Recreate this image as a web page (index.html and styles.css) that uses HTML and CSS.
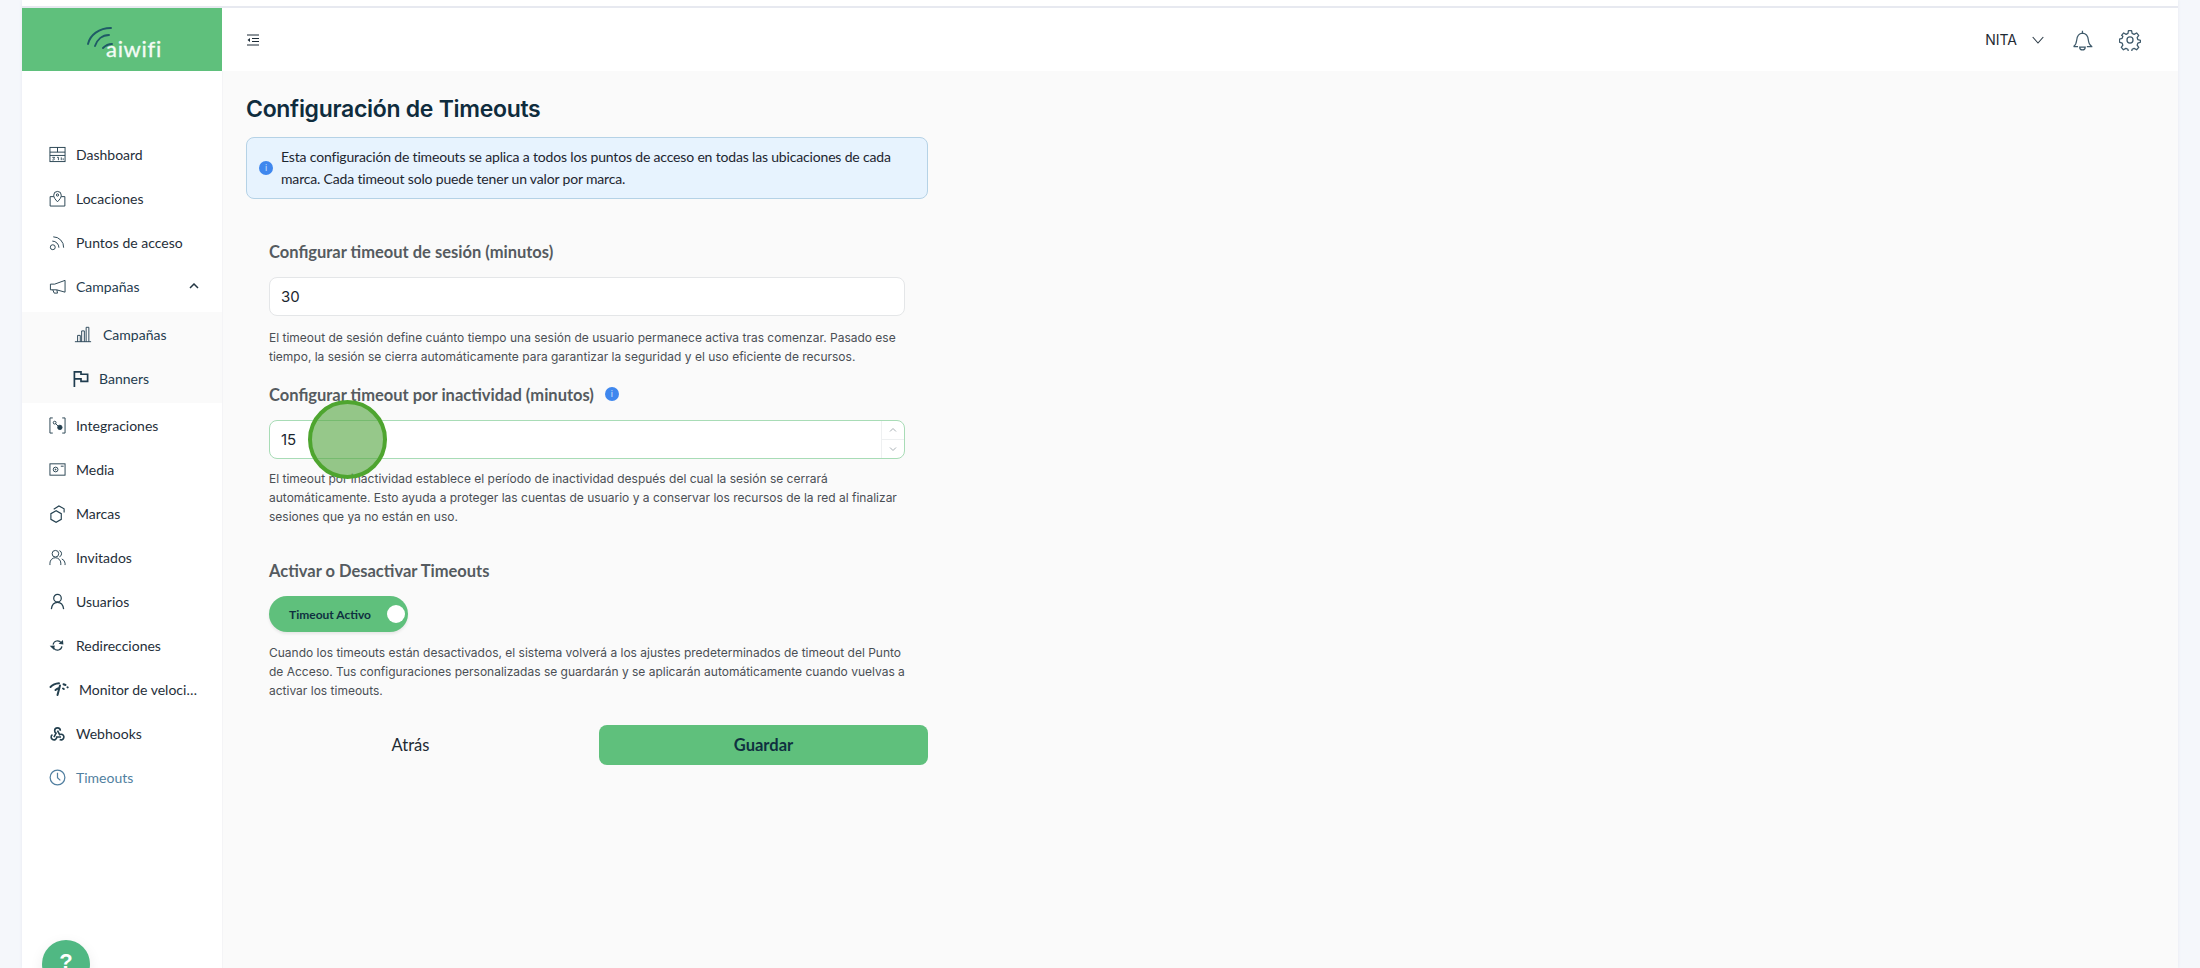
FILE: index.html
```html
<!DOCTYPE html>
<html lang="es">
<head>
<meta charset="utf-8">
<title>Configuración de Timeouts</title>
<link rel="stylesheet" href="styles.css">
</head>
<body>
<div class="window">
  <div class="topstrip"></div>
  <div class="app">
    <aside class="sidebar">
      <div class="brand">
        <svg class="brand-arcs" viewBox="0 0 30 24" fill="none" stroke="#1f5a66" stroke-linecap="round" stroke-width="1.900"><path d="M1 18C3 9 12 2 24 2"/><path d="M8 20C10 14 15 9 22 9"/><path d="M16 22C18 20 21 18 25 18"/></svg>
        <span class="brand-name">aiwifi</span>
      </div>
      <nav class="nav">
        <a class="nav-item"><svg class="ico" viewBox="0 0 18 18" fill="none" stroke="currentColor"><rect x="1" y="1.5" width="16" height="15"/><path d="M1 6.5h16M1 10h16M9 1.5v5"/><path d="M3.5 12h2.5l-1 1.2c1.2 0 1.2 2-1.5 1.6M8.500 12h1.500v3M13 12v3M15 13v2" stroke-width=".9"/></svg><span>Dashboard</span></a>
        <a class="nav-item"><svg class="ico" viewBox="0 0 18 18" fill="none" stroke="currentColor"><path d="M5 7H1.200v10h15.600V7H13"/><path d="M9 12.500C6.500 9.800 5 8 5 5.500a4 4 0 0 1 8 0C13 8 11.500 9.800 9 12.500z"/><circle cx="9" cy="5.300" r="1.200"/></svg><span>Locaciones</span></a>
        <a class="nav-item"><svg class="ico" viewBox="0 0 18 18" fill="none" stroke="currentColor"><circle cx="4" cy="14" r="2.600"/><path d="M3.500 7.500a7 7 0 0 1 7 7M4.500 3a11 11 0 0 1 11 11.500"/></svg><span>Puntos de acceso</span></a>
        <a class="nav-item nav-open"><svg class="ico" viewBox="0 0 18 18" fill="none" stroke="currentColor"><path d="M17 2.500v12.500L8 12.500H1.500V6.500H6L17 2.500z"/><path d="M4 12.500l1.500 3.500H9l-.7-3.500"/></svg><span>Campañas</span><svg class="caret" viewBox="0 0 10 6" fill="none" stroke="currentColor" stroke-width="1.500"><path d="M1 5l4-4 4 4"/></svg></a>
        <div class="submenu">
          <a class="sub-item"><svg class="sub-ico" viewBox="0 0 20 18" fill="none" stroke="currentColor"><path d="M1 17h18M4 17v-7h3v7M8.500 17V5h3v12M13.500 17V1h3v16"/></svg><span>Campañas</span></a>
          <a class="sub-item sub-flag"><svg class="sub-ico" viewBox="0 0 18 18" fill="none" stroke="currentColor" stroke-width="1.800"><path d="M2 18V2h7v2.500h7v7.500H9V9.500H2"/></svg><span>Banners</span></a>
        </div>
        <a class="nav-item"><svg class="ico" viewBox="0 0 18 18" fill="none" stroke="currentColor"><path d="M4 1H1v16h3M14 1h3v16h-3"/><circle cx="6" cy="6" r="1.500"/><circle cx="11.500" cy="11" r="2.300" fill="currentColor"/><path d="M7 7l3 3"/></svg><span>Integraciones</span></a>
        <a class="nav-item"><svg class="ico" viewBox="0 0 18 18" fill="none" stroke="currentColor"><rect x="1" y="3" width="16" height="12"/><circle cx="7" cy="9" r="2.500"/><circle cx="7" cy="9" r=".5" fill="currentColor"/><path d="M12.500 5.500h3"/></svg><span>Media</span></a>
        <a class="nav-item"><svg class="ico" viewBox="0 0 18 18" fill="none" stroke="currentColor" stroke-width="1.200"><path d="M7.500 6L2 9.200v6l5.500 3.100 5.500-3.100v-6z"/><path d="M5 4.500L10.500 1l5.500 3v4"/></svg><span>Marcas</span></a>
        <a class="nav-item"><svg class="ico" viewBox="0 0 18 18" fill="none" stroke="currentColor"><circle cx="6.800" cy="5" r="3.500"/><path d="M1 17v-2a5.500 5.500 0 0 1 11.500 0v2"/><path d="M11 1.700a3.500 3.500 0 0 1 0 6.600M13.500 10.500A5.500 5.500 0 0 1 17 15v2"/></svg><span>Invitados</span></a>
        <a class="nav-item"><svg class="ico" viewBox="0 0 18 18" fill="none" stroke="currentColor" stroke-width="1.300"><circle cx="9" cy="5.500" r="4"/><path d="M2.500 17c.6-4.500 3-7 6.500-7s5.900 2.500 6.500 7"/></svg><span>Usuarios</span></a>
        <a class="nav-item"><svg class="ico ico-small" viewBox="0 0 18 18" fill="none" stroke="currentColor" stroke-width="1.500"><path d="M3.500 8a5.600 5.600 0 0 1 10-2.500M14.500 10a5.600 5.600 0 0 1-10 2.500"/><path d="M12 6.500l3.500.5-.3-3.300z" fill="currentColor"/><path d="M1 10l3.700-.2-.5 3.300z" fill="currentColor"/></svg><span>Redirecciones</span></a>
        <a class="nav-item nav-speed"><svg class="ico" viewBox="0 0 20 18" fill="none" stroke="currentColor" stroke-width="2" stroke-linecap="round"><path d="M1.500 7C3.500 4.800 6.500 3.500 10 3.300M6.500 10c1-.9 2-1.500 3-1.700M11 5.500L8.500 15M14.500 4.200l2 .8M14 8.500l.8.500M18.500 7.200l.2.2"/></svg><span class="ellip">Monitor de velocidad</span></a>
        <a class="nav-item nav-hook"><svg class="ico" viewBox="0 0 24 24" fill="none" stroke="currentColor" stroke-width="2.300"><path d="M4.876 13.610a4 4 0 1 0 6.124 3.390h6"/><path d="M15.066 20.502a4 4 0 1 0 1.934-7.502c-.706 0-1.424.179-2 .5l-3-5.500"/><path d="M16 8a4 4 0 1 0-8 0c0 1.506.77 2.818 2 3.500l-3 5.500"/></svg><span>Webhooks</span></a>
        <a class="nav-item nav-active"><svg class="ico" viewBox="0 0 18 18" fill="none" stroke="currentColor" stroke-width="1.300"><circle cx="9" cy="9" r="7.800"/><path d="M9 4v5.300l3 2.700"/></svg><span>Timeouts</span></a>
      </nav>
    </aside>
    <div class="main">
      <header class="topbar">
        <svg class="menu-ico" viewBox="0 0 14 14" fill="none" stroke="#1d2b36"><path d="M1 2h12M6 5.500h7M6 8.500h7M1 12h12"/><path d="M4 5L1.500 7 4 9z" fill="#1d2b36" stroke="none"/></svg>
        <div class="top-right">
          <span class="user">NITA</span>
          <svg class="chev" viewBox="0 0 12 8" fill="none" stroke="#2b3a46" stroke-width="1.100"><path d="M.7 1l5.300 6 5.300-6"/></svg>
          <svg class="bell" viewBox="0 0 20 20" fill="none" stroke="#3f5a6b" stroke-width="1.100"><path d="M1.500 16c2-1.500 2.500-3 2.800-6 .3-3.500 2.200-6 5.200-6.300 3 .3 5 2.800 5.300 6 .3 3 1 4.800 3.200 6.300"/><path d="M1.500 16h4M13.500 16h5M9.500 3.700V1.500"/><path d="M7 16.500a2.500 2.500 0 0 0 5 0z"/></svg>
          <svg class="gear" viewBox="0 0 24 24" fill="none" stroke="#3f5a6b" stroke-width="1.400" stroke-linejoin="round"><circle cx="12" cy="12" r="3.300"/><path d="M10.300 1.800h3.400l.6 3 2.200 1 2.700-1.500 2.300 2.600-1.700 2.500.8 2.300 2.900.8v1.900l-2.900.9-.8 2.300 1.700 2.500-2.300 2.500-2.700-1.500-2.200 1-.6 3h-3.400l-.6-3-2.200-1-2.700 1.500-2.300-2.500 1.700-2.500-.8-2.300-2.900-.9V11l2.900-.8.800-2.300L2.800 6.900l2.300-2.600 2.700 1.500 2-1z"/></svg>
        </div>
      </header>
      <main class="content">
        <h1 class="title">Configuración de Timeouts</h1>
        <div class="notice">
          <span class="info-dot">i</span>
          <p>Esta configuración de timeouts se aplica a todos los puntos de acceso en todas las ubicaciones de cada marca. Cada timeout solo puede tener un valor por marca.</p>
        </div>
        <section class="form">
          <div class="label">Configurar timeout de sesión (minutos)</div>
          <div class="field"><span>30</span></div>
          <p class="help">El timeout de sesión define cuánto tiempo una sesión de usuario permanece activa tras comenzar. Pasado ese tiempo, la sesión se cierra automáticamente para garantizar la seguridad y el uso eficiente de recursos.</p>
          <div class="label label-two">Configurar timeout por inactividad (minutos)<span class="info-dot info-inline">i</span></div>
          <div class="field field-focus">
            <span>15</span>
            <div class="spin">
              <svg viewBox="0 0 8 5" fill="none" stroke="#a8b0b5"><path d="M1 4l3-3 3 3"/></svg>
              <svg viewBox="0 0 8 5" fill="none" stroke="#a8b0b5"><path d="M1 1l3 3 3-3"/></svg>
            </div>
            <div class="click-marker"></div>
          </div>
          <p class="help help-two">El timeout por inactividad establece el período de inactividad después del cual la sesión se cerrará automáticamente. Esto ayuda a proteger las cuentas de usuario y a conservar los recursos de la red al finalizar sesiones que ya no están en uso.</p>
          <div class="label label-three">Activar o Desactivar Timeouts</div>
          <div class="switch"><span>Timeout Activo</span><i class="knob"></i></div>
          <p class="help help-three">Cuando los timeouts están desactivados, el sistema volverá a los ajustes predeterminados de timeout del Punto de Acceso. Tus configuraciones personalizadas se guardarán y se aplicarán automáticamente cuando vuelvas a activar los timeouts.</p>
        </section>
        <div class="actions">
          <button class="btn btn-back">Atrás</button>
          <button class="btn btn-save">Guardar</button>
        </div>
      </main>
    </div>
  </div>
  <div class="help-fab">?</div>
</div>
</body>
</html>
```
FILE: styles.css
```css
* { box-sizing: border-box; }
html, body { margin: 0; height: 100%; }
body { background: #f5f7fb; overflow: hidden; font-family: "Lato", "Liberation Sans", sans-serif; }
.window { position: relative; height: 968px; margin: 0 22px; background: #fff; display: flex; flex-direction: column; overflow: hidden; box-shadow: 0 0 3px #e4e8f1; }
.topstrip { height: 8px; flex: none; background: #fff; border-bottom: 2px solid #e7e9f0; }
.app { flex: 1; display: flex; min-height: 0; }
.sidebar { width: 200px; flex: none; background: #fff; }
.brand { height: 63px; background: #5fc07c; position: relative; display: flex; padding: 26px 0 0 84px; }
.brand-arcs { position: absolute; left: 65px; top: 18px; width: 30px; height: 24px; }
.brand-name { color: #f3fbf5; font-size: 22px; line-height: 30px; letter-spacing: .7px; -webkit-text-stroke: .3px #f3fbf5; }
.nav { padding-top: 61px; }
.nav-item { height: 44px; display: flex; align-items: center; padding-left: 27px; gap: 10px; font-size: 14px; color: #1f2f3a; }
.ico { width: 17px; height: 17px; flex: none; color: #24404f; overflow: visible; }
.ico-small { transform: scale(.85); }
.caret { width: 10px; height: 6px; margin-left: 40px; color: #243744; }
.nav-open { color: #1f3c4f; }
.submenu { margin-top: 4px; height: 91px; background: #fafafa; }
.sub-item { height: 44px; display: flex; align-items: center; gap: 11px; padding-left: 52px; font-size: 14px; color: #1f3c4f; }
.sub-ico { width: 18px; height: 17px; flex: none; }
.sub-flag { gap: 9px; padding-left: 50px; }
.nav-speed { gap: 10px; }
.nav-speed .ico { width: 20px; height: 18px; }
.ellip { width: 118px; white-space: nowrap; overflow: hidden; text-overflow: ellipsis; }
.nav-active { color: #517fa0; }
.nav-active .ico { color: #517fa0; }
.main { flex: 1; background: #fafafa; min-width: 0; box-shadow: inset 1px 0 0 #f4f4f6; }
.topbar { height: 63px; background: #fff; display: flex; align-items: center; justify-content: space-between; padding: 0 37px 0 24px; }
.menu-ico { width: 14px; height: 14px; }
.top-right { display: flex; align-items: center; }
.user { font-family: "Inter", sans-serif; font-size: 14px; color: #1f2b34; }
.chev { width: 12px; height: 8px; margin-left: 15px; }
.bell { width: 22px; height: 22px; margin-left: 28px; }
.gear { width: 22px; height: 22px; margin-left: 25px; }
.content { padding: 23px 0 0 24px; width: 706px; }
.title { margin: 0; font-family: "Inter", sans-serif; font-weight: 600; font-size: 23px; line-height: 30px; letter-spacing: -.3px; color: #0f2c3d; }
.notice { margin-top: 13px; height: 62px; display: flex; align-items: center; gap: 8px; padding: 0 20px 0 12px; background: #e7f3fe; border: 1px solid #b5d2e6; border-radius: 8px; }
.notice p { margin: 0; font-size: 14px; line-height: 22px; letter-spacing: -.17px; color: #1d2630; }
.info-dot { width: 14px; height: 14px; flex: none; border-radius: 50%; background: #3f87ee; color: #cfe2fc; font: 9px/14px "Inter", sans-serif; text-align: center; }
.form { padding: 0 23px; }
.label { margin-top: 41px; font-size: 16.500px; font-weight: 700; line-height: 24px; color: #555b60; display: flex; align-items: center; }
.label-two { margin-top: 17px; }
.label-three { margin-top: 33px; }
.info-inline { margin-left: 11px; margin-top: -2px; }
.field { position: relative; margin-top: 13px; height: 39px; display: flex; align-items: center; padding-left: 11px; background: #fff; border: 1px solid #e4e6e8; border-radius: 8px; font-family: "Inter", sans-serif; font-size: 15px; color: #1c2730; }
.field-focus { border-color: #a8dcb6; }
.spin { position: absolute; right: 0; top: 0; bottom: 0; width: 23px; display: flex; flex-direction: column; border-left: 1px solid #eef0f1; }
.spin svg { flex: 1; min-height: 0; padding: 6px 7px; }
.spin svg:first-child { border-bottom: 1px solid #eef0f1; }
.click-marker { position: absolute; left: 38px; top: -21px; width: 79px; height: 79px; border-radius: 50%; background: rgba(88, 168, 70, .63); border: 4px solid #4ea52f; }
.help { margin: 12px 0 0; font-family: "Inter", sans-serif; font-size: 12px; line-height: 19px; color: #4a4f55; }
.help-two { margin-top: 10px; }
.help-three { margin-top: 11px; }
.switch { margin-top: 13px; width: 139px; height: 36px; position: relative; border-radius: 18px; background: #5fc07c; display: flex; align-items: center; padding-left: 20px; font-size: 12px; font-weight: 700; color: #0f3040; box-shadow: 0 2px 3px rgba(0, 0, 0, .08); }
.knob { position: absolute; right: 3px; top: 9px; width: 18px; height: 18px; border-radius: 50%; background: #fff; }
.actions { margin-top: 25px; display: flex; gap: 24px; }
.btn { flex: 1; height: 40px; border: 0; border-radius: 8px; font-family: "Lato", sans-serif; font-size: 16.500px; background: none; color: #1d2a33; padding: 0; }
.btn-save { background: #5fc07c; font-weight: 700; color: #0f3040; }
.help-fab { position: absolute; left: 20px; top: 940px; width: 48px; height: 48px; border-radius: 50%; background: #50b883; color: #fff; text-align: center; font: 700 22px/44px "Liberation Sans", sans-serif; box-shadow: 0 4px 14px rgba(0, 0, 0, .08); }
```
